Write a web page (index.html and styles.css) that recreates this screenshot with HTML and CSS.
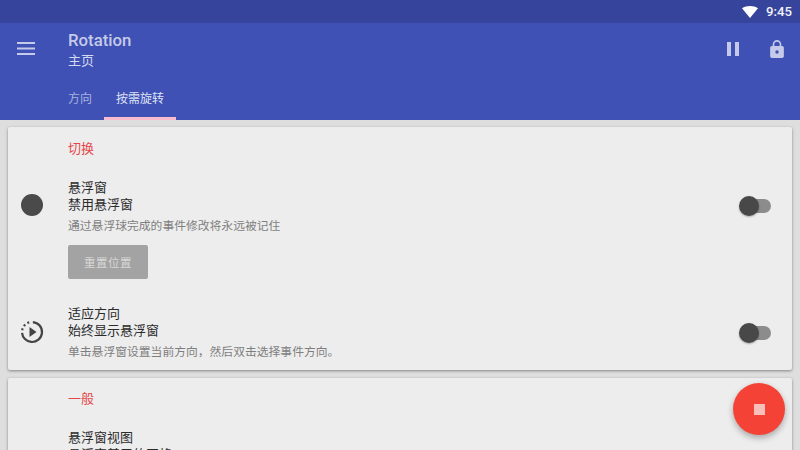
FILE: index.html
```html
<!DOCTYPE html>
<html lang="zh-CN">
<head>
    <meta charset="UTF-8">
    <title>Rotation</title>
    <link rel="stylesheet" href="styles.css">
</head>
<body>
    <div class="status-bar">
        <svg class="wifi" width="16" height="12" viewBox="0 0 18 14" preserveAspectRatio="none"><path d="M0 2.600C2.500.9 5.600 0 9 0s6.500.9 9 2.600L9 14z" fill="#fff"/></svg>
        <span class="clock">9:45</span>
    </div>
    <header class="app-bar">
        <div class="toolbar">
            <svg class="menu" width="18" height="13" viewBox="0 0 18 13"><path d="M0 0h18v2H0zM0 5.500h18v2H0zM0 11h18v2H0z" fill="#c5cae9"/></svg>
            <div class="titles">
                <div class="title">Rotation</div>
                <div class="subtitle">主页</div>
            </div>
            <svg class="pause" width="12" height="14" viewBox="0 0 12 14"><path d="M0 0h4v14H0zM8 0h4v14H8z" fill="#c5cae9"/></svg>
            <svg class="lock" width="14" height="18" viewBox="0 0 16 21"><path fill="#c5cae9" fill-rule="evenodd" d="M14 7h-1V5A5 5 0 0 0 3 5v2H2a2 2 0 0 0-2 2v10a2 2 0 0 0 2 2h12a2 2 0 0 0 2-2V9a2 2 0 0 0-2-2zM8 16a2 2 0 1 1 0-4 2 2 0 0 1 0 4zm3.100-9H4.900V5a3.100 3.100 0 0 1 6.200 0z"/></svg>
        </div>
        <nav class="tabs">
            <a class="tab">方向</a>
            <a class="tab active">按需旋转</a>
        </nav>
    </header>
    <main class="content">
        <section class="card">
            <h2 class="card-title">切换</h2>
            <div class="row">
                <div class="row-icon"><span class="dot"></span></div>
                <div class="row-text">
                    <div class="row-title">悬浮窗</div>
                    <div class="row-title">禁用悬浮窗</div>
                    <div class="row-desc">通过悬浮球完成的事件修改将永远被记住</div>
                    <button class="btn">重置位置</button>
                </div>
                <div class="switch"><span class="track"></span><span class="thumb"></span></div>
            </div>
            <div class="row row-second">
                <div class="row-icon">
                    <svg width="24" height="24" viewBox="0 0 24 24"><circle cx="12" cy="12" r="10" fill="none" stroke="#444" stroke-width="2.200" stroke-dasharray="45 2.800 1.900 2.600 1.900 2.600 1.900 4" transform="rotate(-85 12 12)"/><path d="M9.500 7v10l7-5z" fill="#444"/></svg>
                </div>
                <div class="row-text">
                    <div class="row-title">适应方向</div>
                    <div class="row-title">始终显示悬浮窗</div>
                    <div class="row-desc">单击悬浮窗设置当前方向，然后双击选择事件方向。</div>
                </div>
                <div class="switch"><span class="track"></span><span class="thumb"></span></div>
            </div>
        </section>
        <section class="card card-general">
            <h2 class="card-title">一般</h2>
            <div class="row">
                <div class="row-icon"></div>
                <div class="row-text">
                    <div class="row-title">悬浮窗视图</div>
                    <div class="row-title">悬浮窗基于的网格</div>
                </div>
            </div>
        </section>
    </main>
    <button class="fab"><span class="fab-stop"></span></button>
</body>
</html>
```

FILE: styles.css
```css
html,
body {
    margin: 0;
    height: 450px;
    overflow: hidden;
    background-color: #dedede;
    font-family: "Noto Sans CJK SC", Roboto, sans-serif;
}
.status-bar {
    height: 23px;
    padding-right: 8px;
    display: flex;
    justify-content: flex-end;
    align-items: center;
    background: #36459b;
}
.wifi {
    margin-right: 8px;
}
.clock {
    font-family: Roboto, sans-serif;
    font-size: 13.200px;
    font-weight: 500;
    color: #f1f2f9;
}
.app-bar {
    height: 97px;
    background: #3f51b5;
    display: flex;
    flex-direction: column;
}
.toolbar {
    height: 57px;
    display: flex;
    align-items: center;
    padding: 0 16px 0 17px;
}
.menu {
    margin: 0 33px 6px 0;
}
.titles {
    flex: 1;
    margin-top: -4px;
}
.title {
    font-family: Roboto, sans-serif;
    font-size: 16.800px;
    font-weight: 500;
    line-height: 20px;
    color: #c5cae9;
}
.subtitle {
    font-size: 13px;
    line-height: 19px;
    color: #d5d9ef;
}
.pause {
    margin: 0 31px 5px 0;
}
.lock {
    margin-bottom: 6px;
}
.tabs {
    flex: 1;
    display: flex;
    padding-left: 56px;
}
.tab {
    padding: 0 12px;
    font-size: 12px;
    line-height: 35px;
    color: #aab2de;
}
.tab.active {
    color: #dfe2f3;
    height: 38px;
    box-sizing: border-box;
    border-bottom: 3px solid #f8bbd0;
    margin-top: 2px;
    line-height: 31px;
}
.content {
    padding: 7px 8px 0;
}
.card {
    background: #ededed;
    border-radius: 2px;
    box-shadow: 0 1px 3px rgba(0, 0, 0, .4);
    margin-bottom: 8px;
    height: 243px;
}
.card-title {
    margin: 0;
    padding: 11px 0 0 60px;
    font-size: 13px;
    font-weight: 400;
    line-height: 20px;
    color: #e5484a;
}
.card-general .card-title {
    padding-top: 10px;
}
.row {
    display: flex;
    margin-top: 20px;
    position: relative;
}
.row-second {
    margin-top: 25px;
}
.row-icon {
    width: 60px;
    flex: none;
    display: flex;
    justify-content: center;
    padding: 16px 12px 0 0;
    box-sizing: border-box;
    align-items: flex-start;
}
.dot {
    width: 22px;
    height: 22px;
    border-radius: 50%;
    background: #4a4a4a;
}
.row-text {
    flex: 1;
}
.row-title {
    font-size: 13px;
    line-height: 17px;
    color: #2b2b2b;
}
.row-desc {
    font-size: 11.800px;
    line-height: 17px;
    margin-top: 4px;
    color: #7e7e7e;
}
.btn {
    display: block;
    width: 80px;
    height: 34px;
    margin-top: 12px;
    border: 0;
    border-radius: 2px;
    background: #a3a3a3;
    font-family: inherit;
    font-size: 11.500px;
    letter-spacing: .5px;
    color: #d8d8d8;
}
.switch {
    position: absolute;
    right: 21px;
    top: 18px;
    width: 32px;
    height: 20px;
}
.row-second .switch {
    top: 19px;
}
.track {
    position: absolute;
    left: 6px;
    right: 0;
    top: 3px;
    height: 14px;
    border-radius: 7px;
    background: #8c8c8c;
}
.thumb {
    position: absolute;
    left: 0;
    top: 0;
    width: 20px;
    height: 20px;
    border-radius: 50%;
    background: #484848;
    box-shadow: 0 1px 2px rgba(0, 0, 0, .3);
}
.fab {
    position: absolute;
    left: 733px;
    top: 383px;
    width: 52px;
    height: 52px;
    padding: 0;
    border: 0;
    border-radius: 50%;
    background: #f44336;
    box-shadow: 0 3px 6px rgba(0, 0, 0, .3);
    display: flex;
    align-items: center;
    justify-content: center;
}
.fab-stop {
    width: 11px;
    height: 11px;
    background: #f9c0bb;
}
```
